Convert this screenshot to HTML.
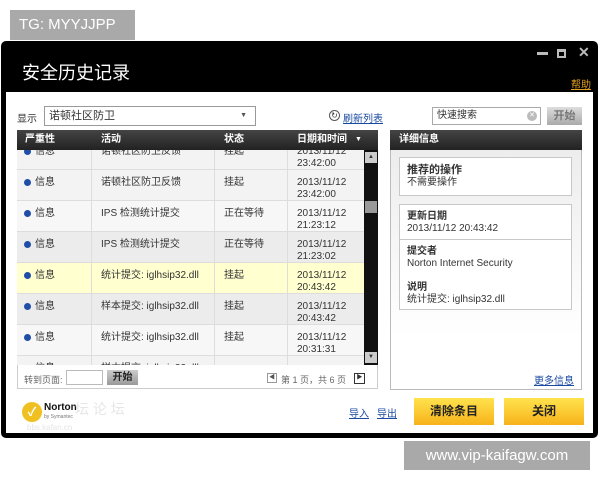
<!DOCTYPE html>
<html><head><meta charset="utf-8"><style>
*{margin:0;padding:0;box-sizing:border-box}
body{width:600px;height:480px;background:#fff;position:relative;overflow:hidden;font-family:"Liberation Sans","Noto Sans CJK SC",sans-serif;font-size:10px;color:#333}
.a{position:absolute}
.tg{left:10px;top:10px;width:125px;height:30px;background:#a9a9a9;color:#fff;font-size:15px;line-height:30px;padding-left:9px}
.win{left:1px;top:41px;width:597px;height:397px;background:#000;border-radius:5px}
.in{left:6px;top:92px;width:587px;height:341px;background:#fff}
.hd{background:linear-gradient(#444,#222);color:#fff;font-weight:bold;font-size:10px;line-height:20px}
.row{left:17px;width:347px;height:31px;border-bottom:1px solid #ddd;background:#f3f3f3}
.row span{position:absolute;top:7px;line-height:12px}
.dot{position:absolute;left:7px;top:9px;width:7px;height:7px;border-radius:50%;background:#1f4ea8}
.vl{position:absolute;top:150px;height:215px;width:1px;background:#ddd}
.lnk{color:#1a4aa0;text-decoration:underline}
.btn{background:linear-gradient(#ffe34d,#f7b21a);font-weight:bold;font-size:12px;color:#222;text-align:center;line-height:27px}
.box{left:399px;width:173px;background:#fff;border:1px solid #c8c8c8;padding:6px 7px;line-height:12px}
</style></head><body>
<div class="a tg">TG: MYYJJPP</div>
<div class="a win"></div>
<div class="a" style="left:22px;top:59px;color:#fff;font-size:18px">安全历史记录</div>
<div class="a" style="left:537px;top:52px;width:11px;height:3px;background:#bbb"></div>
<div class="a" style="left:557px;top:49px;width:9px;height:9px;border:2px solid #bbb;border-top-width:3px"></div>
<div class="a" style="left:578px;top:44px;color:#bbb;font-size:14px;font-weight:bold">✕</div>
<div class="a" style="left:571px;top:76px;color:#e0a020;font-size:10px;text-decoration:underline">帮助</div>
<div class="a in"></div>
<div class="a" style="left:17px;top:110px">显示</div>
<div class="a" style="left:44px;top:106px;width:212px;height:20px;border:1px solid #999;line-height:18px;padding-left:4px;font-size:11px">诺顿社区防卫<span style="position:absolute;right:8px;font-size:7px;color:#555">▼</span></div>
<div class="a" style="left:329px;top:110px;width:11px;height:11px;border-radius:50%;border:1px solid #555;font-size:8px;line-height:9px;text-align:center">↻</div>
<div class="a lnk" style="left:343px;top:110px">刷新列表</div>
<div class="a" style="left:432px;top:107px;width:109px;height:18px;border:1px solid #aaa;line-height:16px;padding-left:4px">快速搜索<span style="position:absolute;right:3px;top:3px;width:10px;height:10px;border-radius:50%;background:#bbb;color:#fff;font-size:7px;line-height:10px;text-align:center">✕</span></div>
<div class="a" style="left:547px;top:107px;width:35px;height:18px;background:linear-gradient(#ddd,#aaa);color:#777;font-weight:bold;font-size:11px;text-align:center;line-height:18px">开始</div>

<div class="a hd" style="left:17px;top:130px;width:361px;height:20px"><span class="a" style="left:8px">严重性</span><span class="a" style="left:84px">活动</span><span class="a" style="left:207px">状态</span><span class="a" style="left:280px">日期和时间</span><span class="a" style="left:338px;font-size:7px">▼</span></div>
<div class="a" style="left:17px;top:150px;width:347px;height:215px;overflow:hidden">
<div class="a row" style="left:0;top:-11px"><i class="dot"></i><span style="left:18px">信息</span><span style="left:84px">诺顿社区防卫反馈</span><span style="left:207px">挂起</span><span style="left:280px">2013/11/12<br>23:42:00</span></div>
<div class="a row" style="left:0;top:20px"><i class="dot"></i><span style="left:18px">信息</span><span style="left:84px">诺顿社区防卫反馈</span><span style="left:207px">挂起</span><span style="left:280px">2013/11/12<br>23:42:00</span></div>
<div class="a row" style="left:0;top:51px;background:#f7f7f7"><i class="dot"></i><span style="left:18px">信息</span><span style="left:84px">IPS 检测统计提交</span><span style="left:207px">正在等待</span><span style="left:280px">2013/11/12<br>21:23:12</span></div>
<div class="a row" style="left:0;top:82px;background:#ececec"><i class="dot"></i><span style="left:18px">信息</span><span style="left:84px">IPS 检测统计提交</span><span style="left:207px">正在等待</span><span style="left:280px">2013/11/12<br>21:23:02</span></div>
<div class="a row" style="left:0;top:113px;background:#ffffcf"><i class="dot"></i><span style="left:18px">信息</span><span style="left:84px">统计提交: iglhsip32.dll</span><span style="left:207px">挂起</span><span style="left:280px">2013/11/12<br>20:43:42</span></div>
<div class="a row" style="left:0;top:144px;background:#ececec"><i class="dot"></i><span style="left:18px">信息</span><span style="left:84px">样本提交: iglhsip32.dll</span><span style="left:207px">挂起</span><span style="left:280px">2013/11/12<br>20:43:42</span></div>
<div class="a row" style="left:0;top:175px;background:#f7f7f7"><i class="dot"></i><span style="left:18px">信息</span><span style="left:84px">统计提交: iglhsip32.dll</span><span style="left:207px">挂起</span><span style="left:280px">2013/11/12<br>20:31:31</span></div>
<div class="a row" style="left:0;top:206px"><i class="dot"></i><span style="left:18px">信息</span><span style="left:84px">样本提交: iglhsip32.dll</span></div>
</div>
<div class="vl" style="left:91px"></div><div class="vl" style="left:214px"></div><div class="vl" style="left:287px"></div>
<div class="a" style="left:364px;top:150px;width:14px;height:215px;background:#111"></div>
<div class="a" style="left:365px;top:152px;width:12px;height:11px;background:#ccc;color:#333;font-size:6px;text-align:center;line-height:11px">▲</div>
<div class="a" style="left:365px;top:201px;width:12px;height:12px;background:#999"></div>
<div class="a" style="left:365px;top:352px;width:12px;height:11px;background:#ccc;color:#333;font-size:6px;text-align:center;line-height:11px">▼</div>
<div class="a" style="left:17px;top:365px;width:361px;height:24px;border:1px solid #ccc;border-top:none;background:#fff"></div>
<div class="a" style="left:24px;top:373px;color:#666;font-size:9px">转到页面:</div>
<div class="a" style="left:66px;top:370px;width:37px;height:15px;border:1px solid #bbb"></div>
<div class="a" style="left:107px;top:370px;width:31px;height:15px;background:linear-gradient(#ccc,#999);font-weight:bold;text-align:center;line-height:15px;color:#222">开始</div>
<div class="a" style="left:267px;top:373px;width:10px;height:10px;border:1px solid #999;font-size:6px;text-align:center;line-height:8px;color:#555">◀</div>
<div class="a" style="left:281px;top:373px;color:#666;font-size:9px">第 1 页，共 6 页</div>
<div class="a" style="left:354px;top:373px;width:11px;height:11px;border:1px solid #333;font-size:6px;text-align:center;line-height:9px;background:#fff">▶</div>

<div class="a" style="left:390px;top:130px;width:192px;height:260px;border:1px solid #bbb;background:linear-gradient(#ebebeb,#fff 80%)"></div>
<div class="a hd" style="left:390px;top:130px;width:192px;height:20px;padding-left:9px">详细信息</div>
<div class="a box" style="top:157px;height:39px"><b style="font-size:11px">推荐的操作</b><br>不需要操作</div>
<div class="a box" style="top:204px;height:106px;padding:0"><div style="padding:6px 7px;border-bottom:1px solid #c8c8c8;height:35px"><b>更新日期</b><br>2013/11/12 20:43:42</div><div style="padding:6px 7px"><b>提交者</b><br>Norton Internet Security<br><br><b>说明</b><br>统计提交: iglhsip32.dll</div></div>
<div class="a lnk" style="left:534px;top:372px">更多信息</div>

<div class="a" style="left:22px;top:402px;width:20px;height:20px;border-radius:50%;background:#f0c020;color:#fff;font-size:12px;text-align:center;line-height:20px;font-weight:bold">✓</div>
<div class="a" style="left:44px;top:402px;font-weight:bold;font-size:10px;color:#111">Norton</div>
<div class="a" style="left:44px;top:414px;font-size:5px;color:#777">by Symantec</div>
<div class="a" style="left:75px;top:399px;font-size:14px;color:#e6e6e6">坛 论 坛</div>
<div class="a" style="left:27px;top:423px;font-size:8px;color:#e6e6e6">bbs.kafan.cn</div>
<div class="a lnk" style="left:349px;top:405px">导入</div>
<div class="a lnk" style="left:377px;top:405px">导出</div>
<div class="a btn" style="left:414px;top:398px;width:80px;height:27px">清除条目</div>
<div class="a btn" style="left:504px;top:398px;width:80px;height:27px">关闭</div>
<div class="a" style="left:404px;top:441px;width:186px;height:29px;background:#a9a9a9;color:#fff;font-size:15px;line-height:29px;text-align:center">www.vip-kaifagw.com</div>
</body></html>
